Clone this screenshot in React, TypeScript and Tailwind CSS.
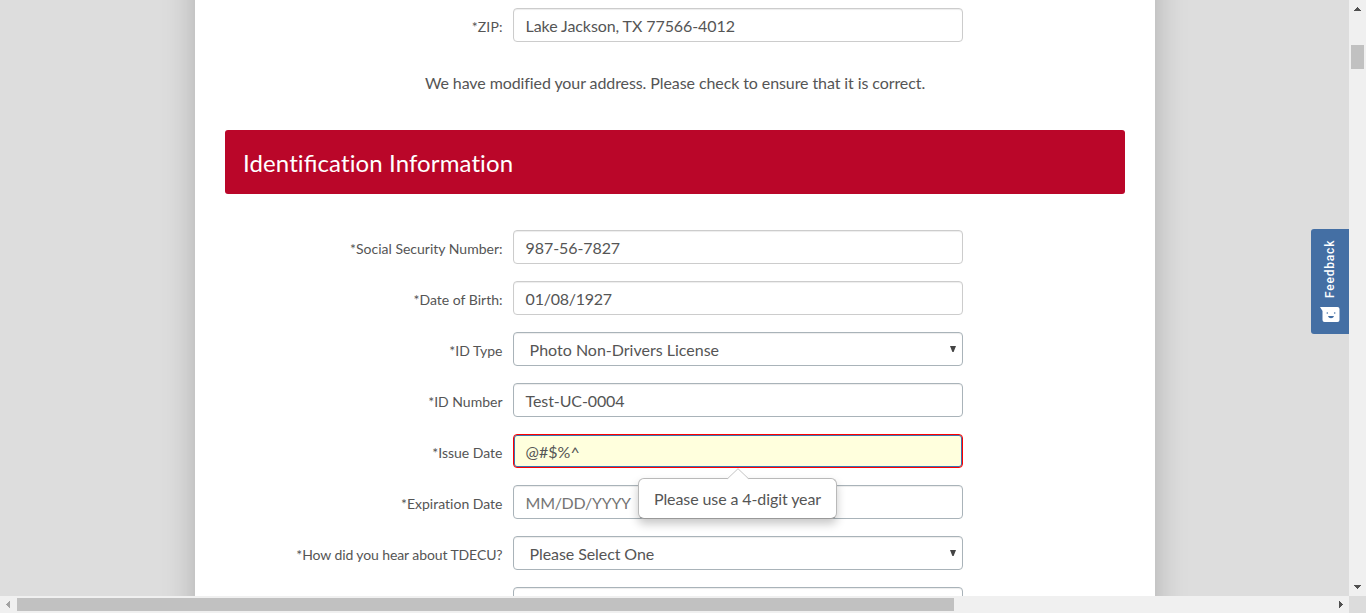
import React from "react";

type Kind = "readonly" | "text" | "select" | "error" | "placeholder";

interface FieldProps {
  label: string;
  value: string;
  kind: Kind;
  hint?: string;
  labelClass?: string;
  valueClass?: string;
}

const boxStyles: Record<Kind, string> = {
  readonly: "border-[#ccc] px-3",
  text: "border-[#a9b3b9] px-3",
  select: "border-[#a9b3b9] pl-4 pr-1",
  error: "border-[#ff0000] bg-[#ffffdd] px-3 shadow-[inset_0_0_0_1px_#3d74b0]",
  placeholder: "border-[#a9b3b9] px-3 text-[#757575]",
};

function Field({ label, value, kind, hint, labelClass = "", valueClass = "" }: FieldProps) {
  const shadow = kind === "error" ? "" : "shadow-[inset_0_1px_1px_rgba(0,0,0,0.075)]";
  return (
    <div className="flex h-[34px] shrink-0 items-center">
      <label className={`w-[308px] pt-[3px] pr-[0.5px] text-right text-[14px] leading-5 whitespace-nowrap ${labelClass}`}>{label}</label>
      <div className={`relative ml-[10px] flex h-[34px] w-[450px] items-center justify-between rounded-[4px] border text-[16px] ${boxStyles[kind]} ${shadow}`}>
        <span className={`-ml-[0.4px] pt-[2px] leading-6 whitespace-nowrap ${valueClass}`}>{value}</span>
        {kind === "select" && (
          <svg className="mr-[2px]" width="6" height="6" viewBox="0 0 6 6" fill="#444">
            <path d="M0 0h6L3.6 6H2.4z" />
          </svg>
        )}
        {hint && (
          <div className="absolute top-[43px] left-[124px] z-10 flex h-[41px] w-[199px] items-center justify-center rounded-[6px] border border-[#b9b9b9] border-b-[#999] bg-white shadow-[0_5px_10px_rgba(0,0,0,0.22)]">
            <svg className="absolute top-[-11px] left-[88px]" width="22" height="12" viewBox="0 0 22 12">
              <path d="M0.5 11 L11 0.7 L21.5 11 V12 H0.5z" fill="#fff" />
              <path d="M0.5 10.7 L11 0.7 L21.5 10.7" fill="none" stroke="#c4c4c4" />
            </svg>
            <span className="leading-6 tracking-[-0.1px] whitespace-nowrap">{hint}</span>
          </div>
        )}
      </div>
    </div>
  );
}

function FeedbackTab() {
  return (
    <button className="absolute top-[229px] right-0 flex h-[105px] w-[38px] flex-col items-center rounded-l-[3px] bg-[#446fa4] pt-[11px] text-white">
      <span className="h-[58px] [writing-mode:vertical-rl] rotate-180 font-['Roboto',sans-serif] text-[12px] leading-[18px] font-medium tracking-[0.8px]">
        Feedback
      </span>
      <svg className="mt-[9px] -ml-px" width="20" height="16" viewBox="0 0 20 16">
        <path d="M0 0h17.500a2 2 0 0 1 2 2v11a2 2 0 0 1-2 2H4.500a2 2 0 0 1-2-2V4z" fill="#fff" />
        <circle cx="7.300" cy="6" r="0.800" fill="#446fa4" />
        <circle cx="14.700" cy="6" r="0.800" fill="#446fa4" />
        <path d="M8 9h6c-.5 1.600-1.600 2.200-3 2.200S8.500 10.600 8 9z" fill="#446fa4" />
      </svg>
    </button>
  );
}

export default function App() {
  return (
    <div className="flex h-[613px] w-[1366px] flex-col overflow-hidden bg-[#ddd] font-['Lato',sans-serif] text-[#555] [font-variant-ligatures:none]">
      <div className="flex h-[596px]">
        <main className="relative h-[596px] w-[1349px] overflow-hidden">
          <div className="-my-10 ml-[195px] h-[676px] w-[960px] bg-white px-[30px] pt-12 shadow-[0_0_30px_rgba(0,0,0,0.22)]">
            <div className="-ml-[30px]">
              <Field label="*ZIP:" value="Lake Jackson, TX 77566-4012" kind="readonly" valueClass="tracking-[-0.09px]" labelClass="tracking-[0.1px]" />
            </div>
            <p className="mt-[29px] text-center text-[16px] leading-6 tracking-[-0.09px]">
              We have modified your address. Please check to ensure that it is correct.
            </p>
            <h2 className="mt-[35px] flex h-16 items-center rounded-[3px] bg-[#ba0629] pt-px pl-[18px] text-[24px] leading-8 text-white">
              <span className="tracking-[0.11px]">
                Identi<span className="tracking-normal [font-variant-ligatures:normal]">fi</span>cation Information
              </span>
            </h2>
            <div className="mt-9 -ml-[30px] flex flex-col gap-[17px]">
              <Field label="*Social Security Number:" value="987-56-7827" kind="readonly" valueClass="tracking-[-0.09px]" />
              <Field label="*Date of Birth:" value="01/08/1927" kind="readonly" valueClass="tracking-[-0.25px]" />
              <Field label="*ID Type" value="Photo Non-Drivers License" kind="select" />
              <Field label="*ID Number" value="Test-UC-0004" kind="text" valueClass="tracking-[-0.1px]" />
              <Field label="*Issue Date" value="@#$%^" kind="error" hint="Please use a 4-digit year" />
              <Field label="*Expiration Date" value="MM/DD/YYYY" kind="placeholder" valueClass="tracking-[-0.32px]" />
              <Field label="*How did you hear about TDECU?" value="Please Select One" kind="select" labelClass="tracking-[-0.1px]" valueClass="tracking-[-0.09px]" />
              <Field label="" value="" kind="text" />
            </div>
          </div>
          <FeedbackTab />
        </main>
        <div className="flex w-[17px] flex-col items-center bg-[#f0f0f0]">
          <svg className="mt-[7px]" width="7" height="4" viewBox="0 0 7 4" fill="#505050" shapeRendering="crispEdges">
            <path d="M3 0h1v1h1v1h1v1h1v1H0V3h1V2h1V1h1z" />
          </svg>
          <div className="mt-[34px] h-6 w-[13px] bg-[#c1c1c1]" />
          <svg className="mt-auto mb-[7px]" width="7" height="4" viewBox="0 0 7 4" fill="#505050" shapeRendering="crispEdges">
            <path d="M0 0h7v1H6v1H5v1H4v1H3V3H2V2H1V1H0z" />
          </svg>
        </div>
      </div>
      <div className="flex h-[17px]">
        <div className="flex w-[1349px] items-center bg-[#f0f0f0]">
          <svg className="ml-[6px]" width="4" height="7" viewBox="0 0 4 7" fill="#a3a3a3" shapeRendering="crispEdges">
            <path d="M4 0v7H3V6H2V5H1V4H0V3h1V2h1V1h1V0z" />
          </svg>
          <div className="ml-[7px] h-[13px] w-[937px] bg-[#c1c1c1]" />
          <svg className="mr-[6px] ml-auto" width="4" height="7" viewBox="0 0 4 7" fill="#505050" shapeRendering="crispEdges">
            <path d="M0 0h1v1h1v1h1v1h1v1H3v1H2v1H1v1H0z" />
          </svg>
        </div>
        <div className="w-[17px] bg-[#dcdcdc]" />
      </div>
    </div>
  );
}
